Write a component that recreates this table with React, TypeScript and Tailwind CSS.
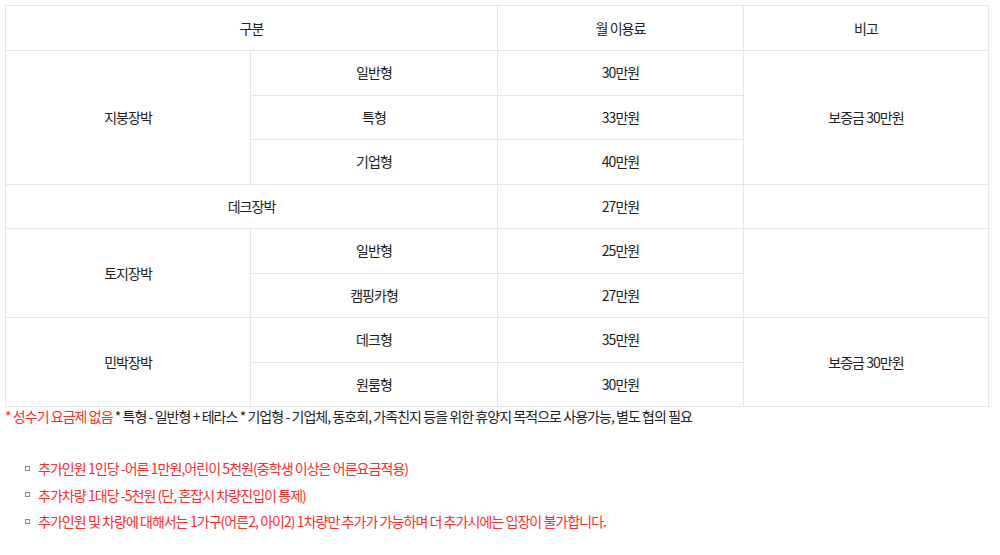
import React from 'react';

const cell = 'border border-[#e6e6e6] h-[44.5px] p-0 text-center align-middle';

export default function App() {
  const notes = [
    '추가인원 1인당 -어른 1만원,어린이 5천원(중학생 이상은 어른요금적용)',
    '추가차량 1대당 -5천원 (단, 혼잡시 차량진입이 통제)',
    '추가인원 및 차량에 대해서는 1가구(어른2, 아이2) 1차량만 추가가 가능하며 더 추가시에는 입장이 불가합니다.',
  ];

  return (
    <div className="w-[1000px] h-[555px] bg-white pl-[5px] pt-[5px] pr-[11px] text-[14px] text-[#222] font-['Noto_Sans_CJK_KR','Noto_Sans',sans-serif] tracking-[-0.95px]">
      <table className="w-full border-collapse table-fixed">
        <colgroup>
          <col className="w-[245px]" />
          <col className="w-[247px]" />
          <col className="w-[246px]" />
          <col className="w-[245px]" />
        </colgroup>
        <thead>
          <tr>
            <th colSpan={2} className={`${cell} font-normal h-[45px]`}>구분</th>
            <th className={`${cell} font-normal h-[45px]`}>월 이용료</th>
            <th className={`${cell} font-normal h-[45px]`}>비고</th>
          </tr>
        </thead>
        <tbody>
          <tr>
            <td rowSpan={3} className={cell}>지붕장박</td>
            <td className={cell}>일반형</td>
            <td className={cell}>30만원</td>
            <td rowSpan={3} className={cell}>보증금 30만원</td>
          </tr>
          <tr>
            <td className={cell}>특형</td>
            <td className={cell}>33만원</td>
          </tr>
          <tr>
            <td className={cell}>기업형</td>
            <td className={cell}>40만원</td>
          </tr>
          <tr>
            <td colSpan={2} className={cell}>데크장박</td>
            <td className={cell}>27만원</td>
            <td className={cell}></td>
          </tr>
          <tr>
            <td rowSpan={2} className={cell}>토지장박</td>
            <td className={cell}>일반형</td>
            <td className={cell}>25만원</td>
            <td rowSpan={2} className={cell}></td>
          </tr>
          <tr>
            <td className={cell}>캠핑카형</td>
            <td className={cell}>27만원</td>
          </tr>
          <tr>
            <td rowSpan={2} className={cell}>민박장박</td>
            <td className={cell}>데크형</td>
            <td className={cell}>35만원</td>
            <td rowSpan={2} className={cell}>보증금 30만원</td>
          </tr>
          <tr>
            <td className={cell}>원룸형</td>
            <td className={cell}>30만원</td>
          </tr>
        </tbody>
      </table>

      <p className="leading-[18px]">
        <span className="text-[#ff2a2a]">* 성수기 요금제 없음</span> * 특형 - 일반형 + 테라스 * 기업형 - 기업체, 동호회, 가족친지 등을 위한 휴양지 목적으로 사용가능, 별도 협의 필요
      </p>

      <ul className="mt-[33px] pl-[20px] flex flex-col gap-[6.5px]">
        {notes.map((n) => (
          <li key={n} className="flex items-center gap-[8px] leading-[20px] text-[#ff2a2a]">
            <span className="w-[5px] h-[5px] border border-[#888] shrink-0" />
            <span>{n}</span>
          </li>
        ))}
      </ul>
    </div>
  );
}
